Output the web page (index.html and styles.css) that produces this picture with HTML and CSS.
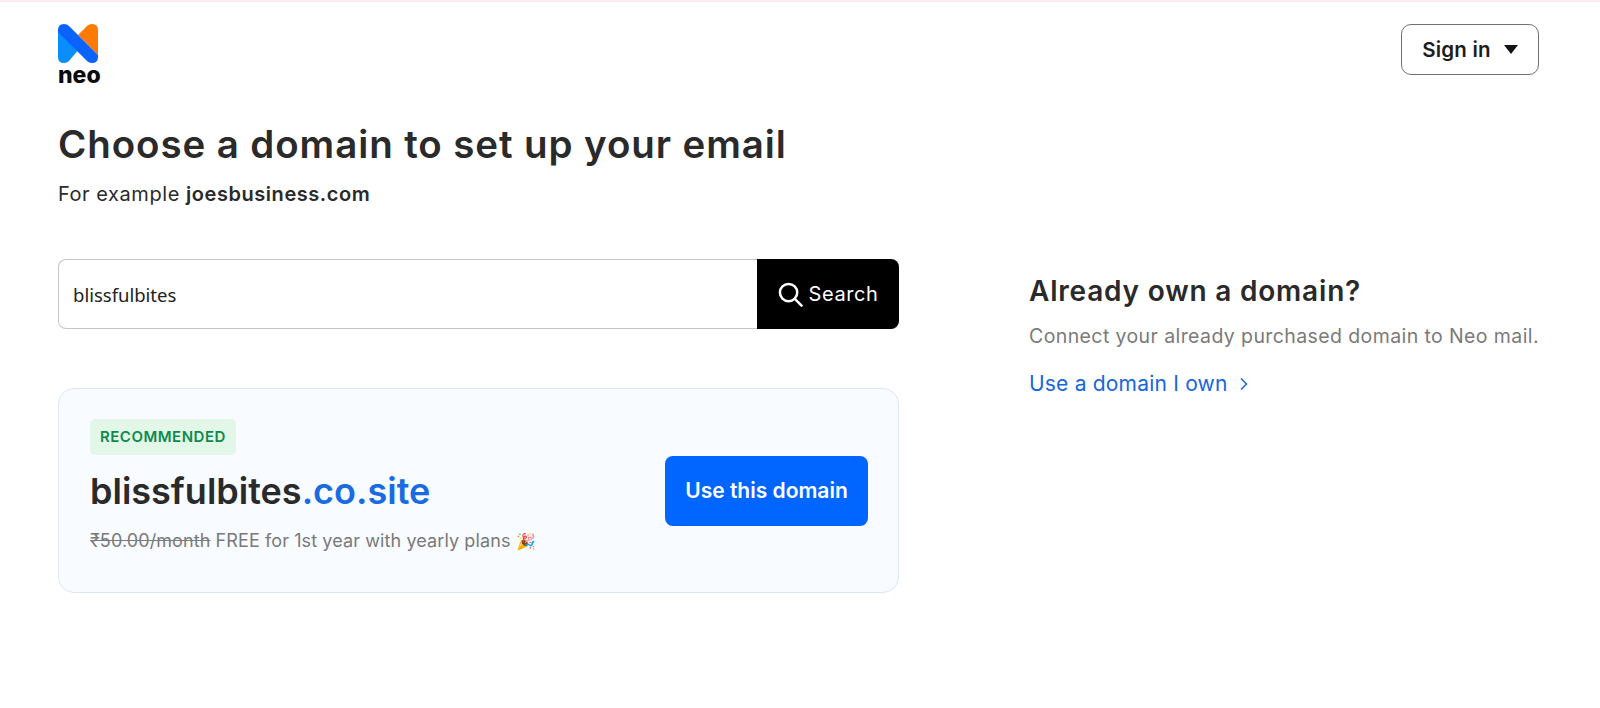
FILE: index.html
```html
<!DOCTYPE html>
<html lang="en">
<head>
    <meta charset="UTF-8">
    <meta name="viewport" content="width=device-width, initial-scale=1.0">
    <title>Choose a domain</title>
    <link rel="stylesheet" href="styles.css">
</head>
<body>
    <header class="top-bar">
        <div class="logo">
            <svg class="logo-mark" width="40" height="39" viewBox="0 0 40 39">
                <path d="M0 6V33Q0 39 6 39Q9 39 11 37L21 25L8 2Z" fill="#0a8dff"/>
                <path d="M29 2Q31 0 34 0Q40 0 40 6V31L20 11Z" fill="#ff7a00"/>
                <path d="M0 6Q0 0 6 0Q9 0 11 2L40 31V33Q40 39 34 39Q31 39 29 37L0 8Z" fill="#0a62ff"/>
            </svg>
            <span class="logo-text">neo</span>
        </div>
        <button class="signin-btn" type="button">Sign in <span class="caret"></span></button>
    </header>

    <section class="intro">
        <h1>Choose a domain to set up your email</h1>
        <p>For example <strong>joesbusiness.com</strong></p>
    </section>

    <main class="columns">
        <div class="left-col">
            <form class="search-box">
                <input type="text" class="search-input" value="blissfulbites">
                <button type="button" class="search-btn">
                    <svg width="25" height="25" viewBox="0 0 26 26" fill="none" stroke="#fff" stroke-width="2.600" stroke-linecap="round">
                        <circle cx="11" cy="11" r="9"/>
                        <path d="M18 18l6.500 6.500"/>
                    </svg>
                    Search
                </button>
            </form>

            <div class="domain-card">
                <div class="domain-info">
                    <span class="badge">RECOMMENDED</span>
                    <h2 class="domain-name">blissfulbites<span class="tld">.co.site</span></h2>
                    <p class="price-line"><s>₹50.00/month</s> FREE for 1st year with yearly plans <span class="party">🎉</span></p>
                </div>
                <button type="button" class="use-btn">Use this domain</button>
            </div>
        </div>

        <aside class="right-col">
            <h3>Already own a domain?</h3>
            <p>Connect your already purchased domain to Neo mail.</p>
            <a class="own-link" href="#">Use a domain I own
                <svg width="10" height="14" viewBox="0 0 10 14" fill="none" stroke="#1766dc" stroke-width="1.500"><path d="M2 1.500L7.500 7 2 12.500"/></svg>
            </a>
        </aside>
    </main>
</body>
</html>
```

FILE: styles.css
```css
* {
    box-sizing: border-box;
}
body {
    font-family: Inter, "Noto Sans", Arial, sans-serif;
    margin: 0;
    padding: 0 61px 0 58px;
    background-color: #fff;
    color: #2a2a2a;
    border-top: 2px solid #fdeaf0;
}
.top-bar {
    display: flex;
    justify-content: space-between;
    align-items: flex-start;
    padding-top: 22px;
}
.logo {
    display: flex;
    flex-direction: column;
    width: 44px;
}
.logo-mark {
    display: block;
}
.logo-text {
    font-size: 23px;
    font-weight: 800;
    line-height: 20px;
    color: #0b0b0b;
    margin-top: 2px;
}
.signin-btn {
    display: flex;
    align-items: center;
    justify-content: center;
    gap: 13px;
    width: 138px;
    height: 51px;
    background: #fff;
    border: 1px solid #6f6f6f;
    border-radius: 10px;
    font-family: inherit;
    font-size: 20.500px;
    font-weight: 600;
    letter-spacing: 0.2px;
    color: #1c1c1c;
}
.caret {
    width: 0;
    height: 0;
    border-left: 7px solid transparent;
    border-right: 7px solid transparent;
    border-top: 9px solid #111;
}
.intro {
    margin-top: 31px;
}
.intro h1 {
    margin: 0;
    font-size: 38.500px;
    font-weight: 600;
    line-height: 56px;
    letter-spacing: 0.9px;
}
.intro p {
    margin: 8px 0 0;
    font-size: 20px;
    line-height: 28px;
    letter-spacing: 0.55px;
}
.intro strong {
    font-weight: 600;
}
.columns {
    display: flex;
    justify-content: space-between;
    margin-top: 51px;
}
.left-col {
    width: 841px;
}
.search-box {
    display: flex;
    height: 70px;
}
.search-input {
    flex: 1;
    min-width: 0;
    padding: 0 14px;
    border: 1px solid #c4c4c4;
    border-right: none;
    border-radius: 8px 0 0 8px;
    font-family: "Noto Sans", Arial, sans-serif;
    font-size: 18.500px;
    color: #222;
    outline: none;
}
.search-btn {
    display: flex;
    align-items: center;
    justify-content: center;
    gap: 6px;
    width: 142px;
    background: #000;
    color: #fff;
    border: none;
    border-radius: 0 8px 8px 0;
    font-family: inherit;
    font-size: 20px;
    letter-spacing: 0.6px;
}
.domain-card {
    display: flex;
    justify-content: space-between;
    align-items: center;
    height: 205px;
    margin-top: 59px;
    padding: 0 30px 0 31px;
    background: #f8fbff;
    border: 1px solid #dbe7f5;
    border-radius: 16px;
}
.domain-info {
    margin-bottom: 8px;
}
.badge {
    display: inline-block;
    height: 36px;
    padding: 0 10px;
    line-height: 36px;
    background: #e2f7e8;
    border-radius: 5px;
    color: #0f8a4b;
    font-size: 15px;
    font-weight: 600;
    letter-spacing: 0.5px;
}
.domain-name {
    margin: 8px 0 0;
    font-size: 36px;
    font-weight: 600;
    line-height: 56px;
}
.tld {
    color: #1a6be0;
}
.price-line {
    margin: 9px 0 0;
    font-size: 18px;
    line-height: 26px;
    letter-spacing: 0.1px;
    color: #7a7a7a;
}
.party {
    font-size: 16px;
}
.use-btn {
    width: 203px;
    height: 70px;
    background: #0066ff;
    color: #fff;
    border: none;
    border-radius: 8px;
    font-family: inherit;
    font-size: 21px;
    font-weight: 600;
}
.right-col {
    width: 510px;
    padding-top: 12px;
}
.right-col h3 {
    margin: 0;
    font-size: 28px;
    font-weight: 600;
    line-height: 40px;
    letter-spacing: 0.8px;
}
.right-col p {
    margin: 11px 0 0;
    font-size: 19.500px;
    line-height: 28px;
    letter-spacing: 0.4px;
    color: #7a7a7a;
    white-space: nowrap;
}
.own-link {
    display: inline-flex;
    align-items: center;
    gap: 11px;
    margin-top: 19px;
    font-size: 21px;
    line-height: 30px;
    letter-spacing: 0.2px;
    color: #1766dc;
    text-decoration: none;
}
```
